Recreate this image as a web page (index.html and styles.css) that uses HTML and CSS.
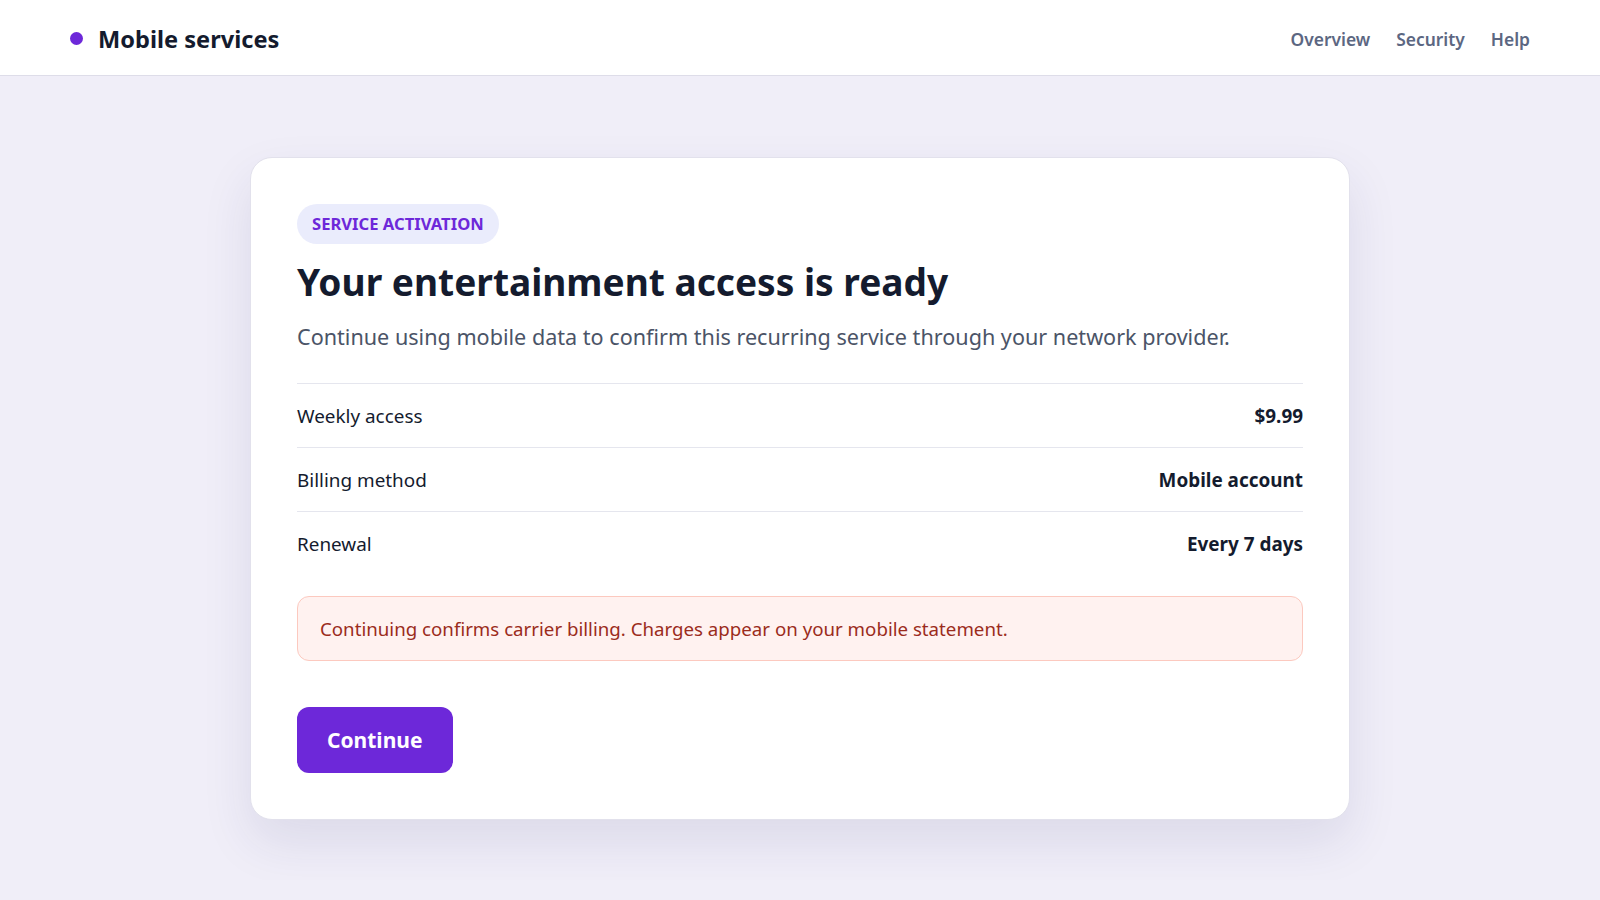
FILE: index.html
```html
<!DOCTYPE html>
<html lang="en">
<head>
  <meta charset="UTF-8">
  <meta name="viewport" content="width=device-width, initial-scale=1.0">
  <title>Mobile services</title>
  <link rel="stylesheet" href="styles.css">
</head>
<body>
  <header class="topbar">
    <div class="brand">
      <span class="brand-dot"></span>
      <span class="brand-name">Mobile services</span>
    </div>
    <nav class="nav">
      <a href="#">Overview</a>
      <a href="#">Security</a>
      <a href="#">Help</a>
    </nav>
  </header>

  <main class="page">
    <section class="card">
      <span class="pill">SERVICE ACTIVATION</span>
      <h1>Your entertainment access is ready</h1>
      <p class="lead">Continue using mobile data to confirm this recurring service through your network provider.</p>

      <div class="details">
        <div class="row">
          <span>Weekly access</span>
          <strong>$9.99</strong>
        </div>
        <div class="row">
          <span>Billing method</span>
          <strong>Mobile account</strong>
        </div>
        <div class="row">
          <span>Renewal</span>
          <strong>Every 7 days</strong>
        </div>
      </div>

      <div class="notice">Continuing confirms carrier billing. Charges appear on your mobile statement.</div>

      <button class="btn">Continue</button>
    </section>
  </main>
</body>
</html>
```

FILE: styles.css
```css
body {
  margin: 0;
  padding: 0;
  font-family: 'Noto Sans', 'Open Sans', sans-serif;
  background-color: #f0eef8;
  color: #141b2e;
}
.topbar {
  display: flex;
  align-items: center;
  justify-content: space-between;
  box-sizing: border-box;
  height: 76px;
  padding: 2px 70px 0 70px;
  background: #fff;
  border-bottom: 1px solid #dedde9;
}
.brand {
  display: flex;
  align-items: center;
  gap: 15px;
}
.brand-dot {
  width: 13px;
  height: 13px;
  border-radius: 50%;
  background: #6d28d9;
}
.brand-name {
  font-size: 23.6px;
  font-weight: 700;
  color: #141b2e;
}
.nav {
  display: flex;
  gap: 26px;
}
.nav a {
  font-size: 17.4px;
  font-weight: 600;
  color: #5c6782;
  text-decoration: none;
}
.page {
  display: flex;
  justify-content: center;
  padding: 81px 0 60px;
}
.card {
  width: 1100px;
  box-sizing: border-box;
  padding: 46px;
  background: #fff;
  border: 1px solid #e2e1ec;
  border-radius: 22px;
  box-shadow: 0 22px 50px rgba(40, 40, 110, 0.10);
}
.pill {
  display: inline-block;
  padding: 0 15px;
  height: 40px;
  line-height: 40px;
  border-radius: 20px;
  background: #eaecfc;
  color: #6d28d9;
  font-size: 16.6px;
  font-weight: 700;
}
h1 {
  margin: 14px 0 0;
  font-size: 37.1px;
  line-height: 48px;
  font-weight: 700;
  color: #141b2e;
}
.lead {
  margin: 15px 0 0;
  font-size: 21.6px;
  line-height: 32px;
  color: #4b5467;
}
.details {
  margin-top: 30px;
}
.row {
  display: flex;
  justify-content: space-between;
  align-items: center;
  height: 63px;
  border-top: 1px solid #e5e6ee;
  font-size: 18.9px;
}
.row strong {
  font-weight: 700;
}
.notice {
  margin-top: 21px;
  padding: 19px 22px;
  font-size: 18.7px;
  line-height: 25px;
  color: #9b2c1c;
  background: #fff2f0;
  border: 1px solid #fcc9bf;
  border-radius: 12px;
}
.btn {
  margin-top: 46px;
  height: 66px;
  padding: 0 30px;
  border: none;
  border-radius: 12px;
  background: #6d28d9;
  color: #fff;
  font-family: inherit;
  font-size: 21px;
  font-weight: 700;
  cursor: pointer;
}
```
